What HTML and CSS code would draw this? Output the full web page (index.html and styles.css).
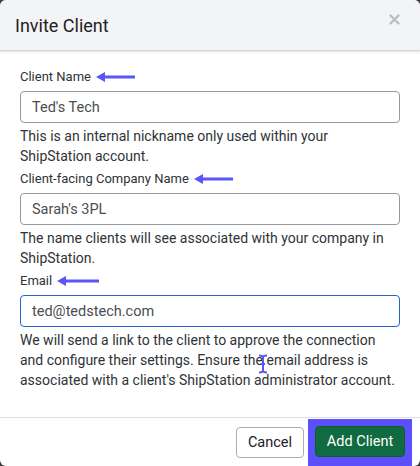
FILE: index.html
```html
<!DOCTYPE html>
<html lang="en">
<head>
  <meta charset="UTF-8">
  <title>Invite Client</title>
  <link rel="stylesheet" href="styles.css">
</head>
<body>
  <div class="modal">
    <div class="modal-header">
      <h1>Invite Client</h1>
      <button class="close" aria-label="Close">
        <svg width="11" height="11" viewBox="0 0 11 11"><path d="M1.5 1.5l8 8M9.5 1.5l-8 8" stroke="#b7bfc7" stroke-width="2.4" stroke-linecap="round"/></svg>
      </button>
    </div>

    <div class="modal-body">
      <div class="field">
        <label>Client Name
          <svg class="arrow" width="40" height="10" viewBox="0 0 40 10"><path d="M39 5H6" stroke="#5a55f5" stroke-width="3"/><path d="M0 5l9-5v10z" fill="#5a55f5"/></svg>
        </label>
        <input class="input" type="text" value="Ted's Tech">
        <p class="help">This is an internal nickname only used within your ShipStation account.</p>
      </div>

      <div class="field">
        <label>Client-facing Company Name
          <svg class="arrow" width="40" height="10" viewBox="0 0 40 10"><path d="M39 5H6" stroke="#5a55f5" stroke-width="3"/><path d="M0 5l9-5v10z" fill="#5a55f5"/></svg>
        </label>
        <input class="input" type="text" value="Sarah's 3PL">
        <p class="help">The name clients will see associated with your company in ShipStation.</p>
      </div>

      <div class="field">
        <label>Email
          <svg class="arrow" width="43" height="10" viewBox="0 0 43 10"><path d="M42 5H6" stroke="#5a55f5" stroke-width="3"/><path d="M0 5l9-5v10z" fill="#5a55f5"/></svg>
        </label>
        <input class="input focused" type="text" value="ted@tedstech.com">
        <p class="help">We will send a link to the client to approve the connection and configure their settings. Ensure the email address is associated with a client's ShipStation administrator account.</p>
        <svg class="ibeam" width="10" height="20" viewBox="0 0 10 20"><path d="M1 1.5c2 0 4 .5 4 2v13c0 1.5 2 2 4 2M9 1.5c-2 0-4 .5-4 2v13c0 1.5-2 2-4 2M3 10h4" stroke="#5a55f5" stroke-width="2" fill="none"/></svg>
      </div>
    </div>

    <div class="modal-footer">
      <button class="btn btn-cancel">Cancel</button>
      <span class="highlight"><button class="btn btn-primary">Add Client</button></span>
    </div>
  </div>
</body>
</html>
```

FILE: styles.css
```css
body {
  margin: 0;
  background: #3b3b3b;
  font-family: Roboto, "Liberation Sans", sans-serif;
  color: #2f3337;
}
.modal {
  height: 466px;
  background: #fff;
  border-radius: 6px;
  display: flex;
  flex-direction: column;
  overflow: hidden;
}
.modal-header {
  height: 50px;
  background: #f3f4f6;
  border-bottom: 1px solid #d6d8db;
  box-shadow: 0 1px 2px rgba(0, 0, 0, 0.12);
  display: flex;
  align-items: center;
  justify-content: space-between;
  padding: 0 15px;
  position: relative;
}
.modal-header h1 {
  margin: 0;
  font-size: 18px;
  font-weight: 400;
  color: #1e2124;
  padding-top: 1px;
}
.close {
  background: none;
  border: none;
  padding: 0;
  margin-top: -9px;
  margin-right: 5px;
  cursor: pointer;
}
.modal-body {
  flex: 1;
  padding: 17px 20px 0;
}
.field {
  margin-bottom: 4px;
  position: relative;
}
.field label {
  display: flex;
  align-items: center;
  font-size: 13px;
  line-height: 18px;
  color: #2f3337;
  margin-bottom: 5px;
}
.arrow {
  margin-left: 5px;
}
.input {
  display: block;
  box-sizing: border-box;
  width: 100%;
  height: 32px;
  border: 1px solid #939ba3;
  border-radius: 4px;
  padding: 0 11px;
  font-family: Roboto, "Liberation Sans", sans-serif;
  font-size: 14.5px;
  color: #4a4e52;
  outline: none;
}
.input.focused {
  border-color: #2363d1;
}
.help {
  margin: 3px 0 0;
  font-size: 14px;
  line-height: 20px;
  color: #2f3337;
}
.ibeam {
  position: absolute;
  left: 238px;
  top: 82px;
}
.modal-footer {
  height: 48px;
  border-top: 1px solid #dcdde0;
  display: flex;
  justify-content: flex-end;
  align-items: flex-end;
  padding-right: 8px;
}
.btn {
  height: 31px;
  border-radius: 4px;
  font-family: Roboto, "Liberation Sans", sans-serif;
  font-size: 14.5px;
  font-weight: 400;
  cursor: pointer;
}
.btn-cancel {
  width: 68px;
  background: #fff;
  border: 1px solid #a9aeb3;
  color: #1e2124;
  margin-bottom: 8px;
}
.highlight {
  display: block;
  background: #5b50fb;
  padding: 7px 7px 9px 7px;
  margin-left: 4px;
}
.btn-primary {
  display: block;
  width: 90px;
  background: #116b40;
  border: 1px solid #0d5c36;
  color: #fff;
}
```
